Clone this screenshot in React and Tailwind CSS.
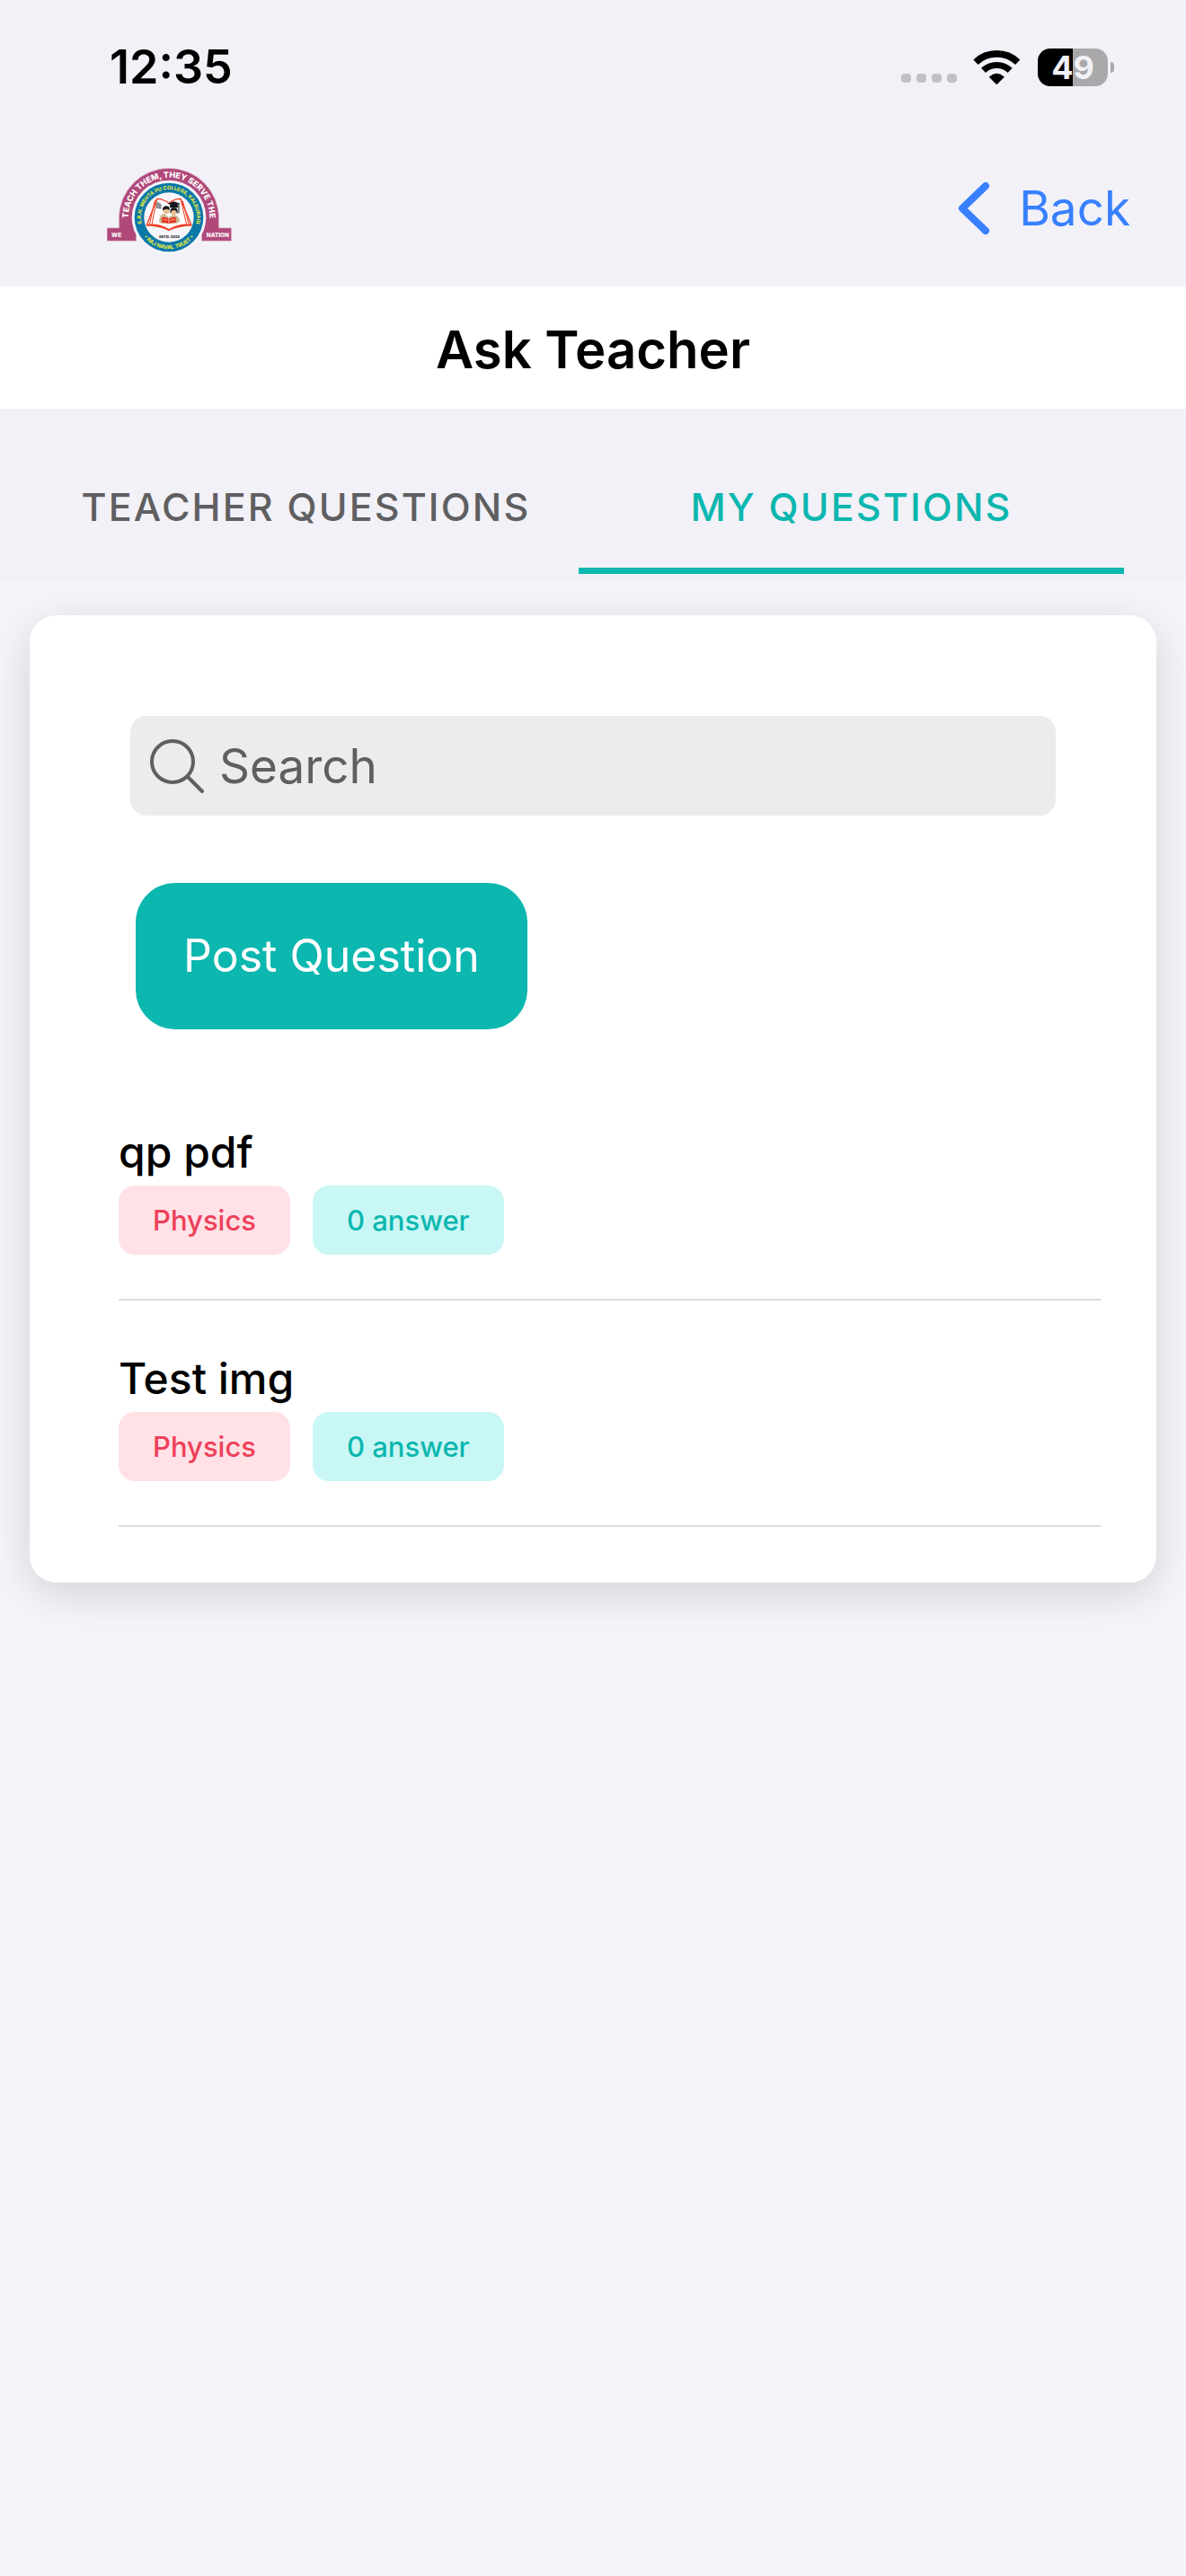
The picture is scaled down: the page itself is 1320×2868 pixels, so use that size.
import React, { useState } from "react";

const questions = [
  { title: "qp pdf", subject: "Physics", answers: "0 answer" },
  { title: "Test img", subject: "Physics", answers: "0 answer" },
];

const tabs = ["TEACHER QUESTIONS", "MY QUESTIONS"];

function WifiIcon() {
  return (
    <svg viewBox="305 71 161 121" className="h-10 w-[53px]" aria-label="Wi-Fi">
      <g fill="none" stroke="#000">
        <path d="M314 114A103 103 0 0 1 456 114" strokeWidth="23" />
        <path d="M340 142A65 65 0 0 1 430 142" strokeWidth="22" />
      </g>
      <path d="M385 189L360 164Q385 142 410 164Z" stroke="#000" strokeWidth="2" strokeLinejoin="round" />
    </svg>
  );
}

function StatusBar() {
  return (
    <div className="flex h-[150px] items-center justify-between pr-20 pl-[122px]">
      <span className="text-[52px] leading-[52px] font-semibold">12:35</span>
      <div className="flex items-center">
        <div className="mt-6 mr-[18px] flex gap-[6px]">
          {[0, 1, 2, 3].map((i) => (
            <span key={i} className="h-[10px] w-[11px] rounded-[4px] bg-[#c1c1c4]" />
          ))}
        </div>
        <WifiIcon />
        <div className="ml-[19px] flex h-[42px] w-[78px] items-center justify-center rounded-[14px] bg-[linear-gradient(to_right,#000_50%,#a9a9ac_50%)] text-[36px] leading-[42px] font-bold text-[#f2f1f7]">
          49
        </div>
        <span className="ml-[3px] h-3 w-1 rounded-r-full bg-[#a9a9ac]" />
      </div>
    </div>
  );
}

function Logo() {
  return (
    <svg viewBox="58 46 417 288" className="h-24 w-[139px]" role="img" aria-label="S.R.N. Mehta PU College, Kalburagi">
      <defs>
        <path id="arch" d="M129 262L129 217A136 136 0 0 1 401 217L401 262" />
        <path id="ringTop" d="M190 269A93 93 0 1 1 340 269" />
        <path id="ringBottom" d="M159 214A106 106 0 0 0 371 214" />
      </defs>
      <path
        d="M58 249H98V217A167 167 0 0 1 432 217V249H474V293H374V217H156V293H58Z"
        fill="#b0497a"
        stroke="#e6cfdd"
        strokeWidth="2"
      />
      <circle cx="265" cy="214" r="124" fill="#f5f5fa" />
      <circle cx="265" cy="214" r="115" fill="#0b78a8" />
      <circle cx="265" cy="214" r="83" fill="#f7f6fa" />
      <g fontFamily="Inter, sans-serif" fontWeight="800">
        <text fill="#fff" fontSize="27" textAnchor="middle">
          <textPath href="#arch" startOffset="50%">TEACH THEM, THEY SERVE THE</textPath>
        </text>
        <text fill="#fff" fontSize="20" x="90" y="279" textAnchor="middle">WE</text>
        <text fill="#fff" fontSize="19" x="428" y="279" textAnchor="middle">NATION</text>
        <text fill="#f4f03a" fontSize="17" fontWeight="700" textAnchor="middle">
          <textPath href="#ringTop" startOffset="50%">S.R.N. MEHTA PU COLLEGE, KALBURAGI</textPath>
        </text>
        <text fill="#f4f03a" fontSize="18" fontWeight="700" textAnchor="middle">
          <textPath href="#ringBottom" startOffset="50%">• RAJ NAVAL TRUST •</textPath>
        </text>
        <text fill="#222" fontSize="12" x="267" y="282" textAnchor="middle">ESTD. 2022</text>
      </g>
      <g stroke="#f03a22" strokeWidth="4" strokeLinejoin="round" fill="#fff">
        <path d="M225 152Q252 154 265 168Q280 152 304 152L340 240Q300 234 265 256Q232 234 191 240Z" />
        <path d="M225 152L208 238M304 152L324 238M218 158L200 238M311 160L332 238" fill="none" strokeWidth="3" />
        <path d="M191 240Q232 240 265 256Q300 240 340 240" fill="none" strokeWidth="5" />
      </g>
      <path d="M224 160L240 170V186L222 184Z" fill="#8d9096" />
      <path d="M260 168L282 161L303 168L282 175Z" fill="#15171c" />
      <path d="M270 172V181H294V172M298 168V200" stroke="#15171c" strokeWidth="3" fill="#15171c" />
      <path d="M232 228Q234 202 250 202L264 214L278 206Q296 204 302 226L292 234H240Z" fill="#c9b48e" />
      <circle cx="256" cy="191" r="11" fill="#e9bd93" />
      <path d="M244 191Q243 176 257 176Q269 177 267 190Q257 182 244 191Z" fill="#15171c" />
      <circle cx="281" cy="196" r="10" fill="#e9bd93" />
      <path d="M270 202Q266 181 282 182Q299 183 293 204L289 192Q280 188 274 192Z" fill="#15171c" />
      <path d="M242 214Q254 212 265 219Q277 212 288 214V232Q276 229 265 236Q254 229 242 232Z" fill="#e8321f" />
      <path d="M265 218V236M247 220L259 224M271 224L284 220" stroke="#fff" strokeWidth="2" />
    </svg>
  );
}

function Header() {
  return (
    <header className="flex h-[169px] items-start justify-between pt-9 pr-[62px] pl-[119px]">
      <Logo />
      <button type="button" className="mt-4 flex items-center gap-8 text-[#3880ff]">
        <svg viewBox="0 0 36 60" className="h-[60px] w-9" fill="none" stroke="currentColor" strokeWidth="8" strokeLinecap="round" strokeLinejoin="round" aria-hidden="true">
          <path d="M31 5L5 30L31 55" />
        </svg>
        <span className="text-[53px] leading-[60px]">Back</span>
      </button>
    </header>
  );
}

function QuestionRow({ title, subject, answers }) {
  return (
    <li className="mb-[50px] border-b-2 border-[#dcdcde] pb-[49px]">
      <h2 className="text-[48px] leading-[74px] font-medium">{title}</h2>
      <div className="flex gap-[25px] text-[31px] leading-[77px] font-medium">
        <span className="rounded-[18px] bg-[#ffe1e6] px-[38px] text-[#ee405a]">{subject}</span>
        <span className="rounded-[18px] bg-[#c9f7f5] px-[38px] text-[#0bb7af]">{answers}</span>
      </div>
    </li>
  );
}

export default function App() {
  const [active, setActive] = useState(1);
  return (
    <div className="min-h-screen bg-[#f3f5f9] font-['Inter',sans-serif] text-black">
      <div className="bg-[#f2f1f7]">
        <StatusBar />
        <Header />
        <h1 className="bg-white pt-[34px] pb-[30px] text-center text-[58px] leading-[72px] font-semibold">Ask Teacher</h1>
        <div role="tablist" className="grid grid-cols-2 pt-4 pr-[69px] pb-2 pl-[37px]">
          {tabs.map((label, i) => (
            <button
              key={label}
              type="button"
              role="tab"
              aria-selected={active === i}
              onClick={() => setActive(i)}
              className={
                "border-b-[7px] pt-[67px] pb-[42px] text-[43px] leading-[52px] font-medium tracking-wider whitespace-nowrap " +
                (active === i ? "border-[#0bb7af] text-[#0bb7af]" : "border-transparent text-[#5f5f61]")
              }
            >
              {label}
            </button>
          ))}
        </div>
      </div>

      <main className="mx-[33px] mt-[38px] rounded-[30px] bg-white pt-28 pr-[62px] pb-3 pl-[99px] shadow-[0_12px_48px_rgba(0,0,0,0.14)]">
        <label className="mr-[50px] ml-[13px] flex h-[111px] items-center gap-[17px] rounded-[18px] bg-[#ececec] px-[22px] text-[#5f5f5f]">
          <svg viewBox="0 0 60 60" className="size-[60px]" fill="none" stroke="currentColor" strokeWidth="4" strokeLinecap="round" aria-hidden="true">
            <circle cx="25" cy="25" r="23" />
            <path d="M42 42L58 58" />
          </svg>
          <input
            type="search"
            aria-label="Search"
            placeholder="Search"
            className="min-w-0 flex-1 bg-transparent text-[53px] leading-[64px] outline-none placeholder:text-[#5f5f5f]"
          />
        </label>

        <button type="button" className="mt-[75px] ml-[19px] block rounded-[44px] bg-[#0bb7af] px-[53px] py-[50px] text-[50px] leading-[63px] text-white">
          Post Question
        </button>

        <ul className="mt-[100px]">
          {questions.map((q) => (
            <QuestionRow key={q.title} {...q} />
          ))}
        </ul>
      </main>
    </div>
  );
}
